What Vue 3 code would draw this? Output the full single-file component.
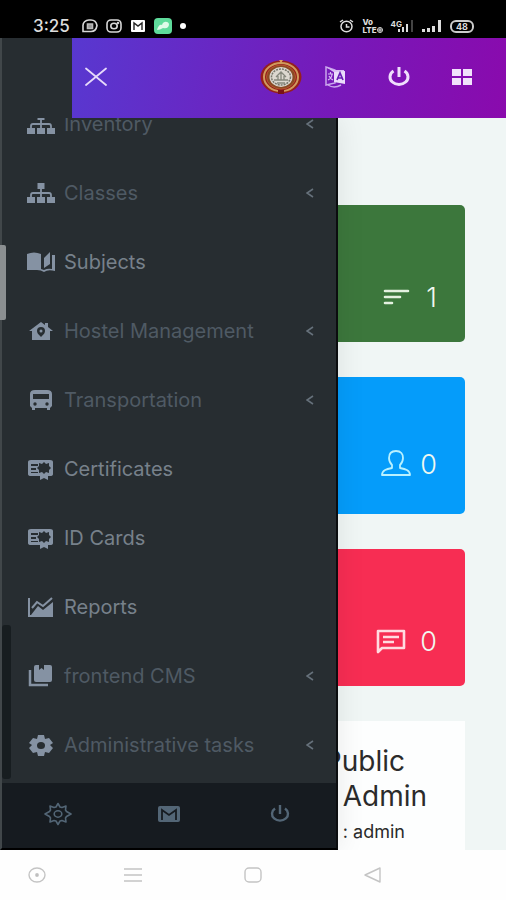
<script setup>
const items = [
  { label: 'Inventory', icon: 'tree', group: true },
  { label: 'Classes', icon: 'tree', group: true },
  { label: 'Subjects', icon: 'book' },
  { label: 'Hostel Management', icon: 'home', group: true },
  { label: 'Transportation', icon: 'bus', group: true },
  { label: 'Certificates', icon: 'certificate' },
  { label: 'ID Cards', icon: 'certificate' },
  { label: 'Reports', icon: 'chart' },
  { label: 'frontend CMS', icon: 'album', group: true },
  { label: 'Administrative tasks', icon: 'gear', group: true },
]
</script>

<template>
  <div class="phone">
    <div class="status">
      <div class="status-left">
        <span class="time">3:25</span>
        <svg width="16" height="14" viewBox="0 0 16 14" fill="none" stroke="#d8d8d8" stroke-width="1.6">
          <path d="M1 12.500V7a6 5.500 0 0 1 6-6h2q5 0 6 5.500-1 6-6 6z" /><path d="M5.500 5h5v4.500h-5z" fill="#999" stroke="#bbb" />
        </svg>
        <svg width="16" height="14" viewBox="0 0 16 14" fill="none" stroke="#d8d8d8" stroke-width="1.600">
          <rect x="1" y="1" width="14" height="12" rx="4" /><ellipse cx="8" cy="7" rx="3.200" ry="2.800" /><circle cx="12" cy="4" r=".5" />
        </svg>
        <svg width="16" height="12" viewBox="0 0 16 12">
          <rect x="1" width="14" height="12" rx="1" fill="#fff" /><path d="M4 10V3l4 3 4-3v7" fill="none" stroke="#222" stroke-width="1.400" />
        </svg>
        <svg class="chat-badge" width="18" height="16" viewBox="0 0 18 16">
          <rect width="18" height="16" rx="4" fill="#5edb9b" /><path d="M3 12c1-4 3-6 5-5 1-4 6-4 7-1 0 4-3 5-6 4-2 1-4 2-6 2z" fill="#dffbe9" />
        </svg>
        <span class="dot"></span>
      </div>
      <div class="status-right">
        <svg width="15" height="14" viewBox="0 0 15 14" fill="none" stroke="#ddd" stroke-width="1.500">
          <ellipse cx="7.500" cy="7.500" rx="5.500" ry="5.300" /><path d="M1 3l3-2M14 3l-3-2M7.500 5v3h3" />
        </svg>
        <span class="volte">
          <span>Vo</span>
          <span class="lte">LTE<svg width="6" height="6" viewBox="0 0 6 6" fill="none" stroke="#ddd"><circle cx="3" cy="3" r="2.500" /><path d="M3 1v4M1 3h4" /></svg></span>
        </span>
        <span class="signal">
          <span class="net">4G</span>
          <svg width="18" height="12" viewBox="0 0 18 12" fill="#ddd">
            <path d="M2 9h2v3H2zM6 7h2v5H6zM10 4h2v8h-2z" /><path d="M15 0h2v12h-2z" fill="#444" />
          </svg>
        </span>
        <svg width="20" height="12" viewBox="0 0 20 12" fill="#ddd">
          <path d="M0 9h3v3H0zM5 8h3v4H5zM10 6h3v6h-3zM16 0h3v12h-3z" />
        </svg>
        <span class="battery">48</span>
      </div>
    </div>

    <header class="header">
      <div class="brand"></div>
      <div class="toolbar">
        <button class="tool close" aria-label="Close menu">
          <svg width="22" height="20" viewBox="0 0 22 20" fill="none" stroke="#e6d9fa" stroke-width="1.800" stroke-linecap="round"><path d="M1 1.500l20 16.500M21 1.500L1 18" /></svg>
        </button>
        <div class="tools">
          <button class="tool" aria-label="School">
            <svg width="42" height="36" viewBox="0 0 42 36">
              <ellipse cx="21" cy="18" rx="20.500" ry="16.500" fill="#96201c" />
              <ellipse cx="21" cy="18" rx="17" ry="14" fill="none" stroke="#cf9a5c" stroke-width="2" />
              <ellipse cx="21" cy="18" rx="14.500" ry="12" fill="#8a4a24" stroke="#b5562c" />
              <ellipse cx="21" cy="18" rx="11.500" ry="10" fill="#dcd8d0" />
              <ellipse cx="21" cy="18" rx="9.500" ry="8" fill="none" stroke="#77766c" stroke-width="1.500" stroke-dasharray="2 1" />
              <path d="M14 21h14M16 18l5-5 5 5M18 17v4M21 14v7M24 17v4M17 24h8" fill="none" stroke="#85877c" stroke-width="1.300" />
              <path d="M19 1l2 3 2-3z" fill="#e0a060" /><path d="M18 31h6v4h-6z" fill="#7a1216" />
            </svg>
          </button>
          <button class="tool" aria-label="Language">
            <svg width="22" height="22" viewBox="0 0 22 22">
              <path d="M2 1l9 3v13l-9 2z" fill="none" stroke="#c9a6ec" stroke-width="1.500" />
              <path d="M4 8h5M6.500 6v2M8 8c0 3-2 5-4 6M5 10c1 2 2 3 4 4" fill="none" stroke="#d9bdf4" stroke-width="1.200" />
              <path d="M2 1l8 3h10v2l-9 1z" fill="#d9bdf4" />
              <path d="M10 6l11-1v13l-11-2z" fill="#eadcfb" />
              <path d="M13 14l3-7 3 7M14 12h4" fill="none" stroke="#681db5" stroke-width="1.700" />
              <path d="M4 19q6 4 13 0" fill="none" stroke="#c9a6ec" stroke-width="1.500" />
            </svg>
          </button>
          <button class="tool" aria-label="Log out">
            <svg width="22" height="20" viewBox="0 0 22 20" fill="none" stroke="#efdffc" stroke-width="3"><path d="M5.500 4A9 7.500 0 1 0 16.500 4M11 0v10" /></svg>
          </button>
          <button class="tool" aria-label="Dashboard">
            <svg width="20" height="16" viewBox="0 0 20 16" fill="#f1e2fb"><path d="M0 0h9v7H0zM11 0h9v7h-9zM0 9h9v7H0zM11 9h9v7h-9z" /></svg>
          </button>
        </div>
      </div>
    </header>

    <div class="body">
      <main class="content">
        <section class="card green">
          <svg width="27" height="18" viewBox="0 0 27 18" fill="none" stroke="#e4f1e0" stroke-width="2.600" stroke-linecap="round"><path d="M2 3h23M2 9h15M2 15h7" /></svg>
          <span>1</span>
        </section>
        <section class="card blue">
          <svg width="32" height="28" viewBox="0 0 32 28" fill="none" stroke="#b9f1ff" stroke-width="1.800" stroke-linejoin="round"><path d="M16 2c-5 0-7 3-7 7 0 3 1 5 3 7v3C7 20 2 21 2 26h28c0-5-5-6-10-7v-3c2-2 3-4 3-7 0-4-2-7-7-7z" /></svg>
          <span>0</span>
        </section>
        <section class="card red">
          <svg width="30" height="26" viewBox="0 0 30 26" fill="none" stroke="#ffdbe0" stroke-width="2.600" stroke-linejoin="round"><path d="M2 3h26v17H6l-4 4zM7 9h16M7 14h11" /></svg>
          <span>0</span>
        </section>
        <section class="profile">
          <h2><span class="line">Public</span><span class="line wide">Admin</span></h2>
          <p class="line">: admin</p>
        </section>
      </main>

      <aside class="sidebar">
        <nav class="menu">
          <a v-for="item in items" :key="item.label" href="#" class="item" :class="{ group: item.group }">
            <svg class="icon" width="28" height="24" viewBox="0 0 28 24">
              <g v-if="item.icon === 'tree'">
                <path d="M10.500 2h7v6h-7zM0 16h8v6H0zM10 16h8v6h-8zM20 16h8v6h-8z" fill="currentColor" />
                <path d="M14 7v10M4 17v-3q0-2 2-2h16q2 0 2 2v3" fill="none" stroke="currentColor" stroke-width="1.800" />
              </g>
              <g v-else-if="item.icon === 'book'" fill="currentColor">
                <path d="M0 4q7-3 14 0v15l3 1q4-2 8-1V5h3v16q-7-2-11 1-3-2-7-2H0z" />
                <path d="M17 8l6-6v12l-6 4z" />
              </g>
              <g v-else-if="item.icon === 'home'">
                <path d="M14 3l4 3V4h3v4l5 4h-3v9H5v-9H2z" fill="currentColor" />
                <path d="M14 18c-3-3-4-4-4-6a4 4 0 0 1 8 0c0 2-1 3-4 6z" class="cut" /><circle cx="14" cy="12" r="1.500" fill="currentColor" />
              </g>
              <g v-else-if="item.icon === 'bus'">
                <path d="M3 6q0-4 5-4h12q5 0 5 4v12l-2 2v2h-3v-2H8v2H5v-2l-2-2z" fill="currentColor" />
                <path d="M6 6h16v5H6z" class="cut" /><circle cx="8" cy="16" r="1.700" class="cut" /><circle cx="20" cy="16" r="1.700" class="cut" />
              </g>
              <g v-else-if="item.icon === 'certificate'">
                <path d="M4 3h19q3 0 3 2v12q0 2-3 2h-2v4l-4-2-4 2v-4H4q-3 0-3-2V5q0-2 3-2z" fill="currentColor" />
                <path d="M4 7h7v2H4zM4 11h5v2H4zM4 15h7v1H4z" class="cut" />
                <path d="M17 5l2 2 3-1v3l2 2-2 2v3l-3-1-2 2-2-2-3 1v-3l-2-2 2-2V6l3 1z" class="cut" />
              </g>
              <g v-else-if="item.icon === 'chart'">
                <path d="M2 3v18h24" fill="none" stroke="currentColor" stroke-width="2" />
                <path d="M5 13l5-6 6 4 9-8" fill="none" stroke="currentColor" stroke-width="2" />
                <path d="M4 20l7-9 5 4 10-8v13z" fill="currentColor" />
              </g>
              <g v-else-if="item.icon === 'album'">
                <path d="M3 6v15h18" fill="none" stroke="currentColor" stroke-width="2.500" />
                <path d="M9 1h14q2 0 2 2v13q0 2-2 2H9q-2 0-2-2V3q0-2 2-2z" fill="currentColor" /><path d="M12 1h5v5l-2.500-2L12 6z" class="cut" />
              </g>
              <g v-else>
                <path d="M11 2h6l1 4 4-1 4 5-3 2 3 3-4 5-4-1-1 4h-6l-1-4-4 1-4-5 3-3-3-2 4-5 4 1z" fill="currentColor" /><ellipse cx="14" cy="12.500" rx="4" ry="3.500" class="cut" />
              </g>
            </svg>
            <span class="label">{{ item.label }}</span>
            <svg v-if="item.group" width="8" height="10" viewBox="0 0 8 10" fill="none" stroke="#66717b" stroke-width="1.600"><path d="M7 1L1 5l6 4" /></svg>
          </a>
        </nav>
        <div class="actions">
          <button class="action" aria-label="Settings">
            <svg width="28" height="24" viewBox="0 0 28 24" fill="none" stroke="currentColor" stroke-width="1.600" stroke-linejoin="round">
              <path d="M14 1.500l2 3.500 2 .5 4-1.500-.5 4 1 1.500 4.500 2.500-4.500 2.500-1 1.500.5 4-4-1.500-2 .5-2 3.500-2-3.500-2-.5-4 1.500.5-4-1-1.500L1 12l4.500-2.500 1-1.500L6 4l4 1.500 2-.5z" /><ellipse cx="14" cy="12" rx="3.800" ry="3.200" />
            </svg>
          </button>
          <button class="action" aria-label="Messages">
            <svg width="22" height="16" viewBox="0 0 22 16"><rect width="22" height="16" rx="2" fill="currentColor" /><path d="M4 14V4l7 5 7-5v10" fill="none" stroke="#161b20" stroke-width="1.800" /></svg>
          </button>
          <button class="action" aria-label="Sign out">
            <svg width="20" height="18" viewBox="0 0 20 18" fill="none" stroke="currentColor" stroke-width="2.400"><path d="M5 3.500A8 6.800 0 1 0 15 3.500M10 0v9" /></svg>
          </button>
        </div>
        <span class="thumb light"></span>
        <span class="thumb dark"></span>
      </aside>
    </div>

    <div class="navbar">
      <svg width="18" height="16" viewBox="0 0 18 16" fill="none" stroke="#c4c4c4" stroke-width="1.400"><ellipse cx="9" cy="8" rx="8" ry="7" /><circle cx="9" cy="8" r="1.200" fill="#aaa" /></svg>
      <svg width="18" height="14" viewBox="0 0 18 14" fill="none" stroke="#c4c4c4" stroke-width="1.400"><path d="M0 1h18M0 7h18M0 13h18" /></svg>
      <svg width="18" height="16" viewBox="0 0 18 16" fill="none" stroke="#c4c4c4" stroke-width="1.400"><rect x="1" y="1" width="16" height="14" rx="4" /></svg>
      <svg width="18" height="18" viewBox="0 0 18 18" fill="none" stroke="#c4c4c4" stroke-width="1.400" stroke-linejoin="round"><path d="M1 9l15-7v14z" /></svg>
    </div>
  </div>
</template>

<style>
body { margin: 0; background: #fff; }
</style>

<style scoped>
.phone {
  min-height: 100vh;
  display: flex;
  flex-direction: column;
  font-family: Inter, Roboto, sans-serif;
}
button { border: 0; padding: 0; background: none; color: inherit; }
svg { display: block; flex: none; }

.status {
  height: 38px;
  box-sizing: border-box;
  padding: 14px 32px 0 33px;
  display: flex;
  justify-content: space-between;
  background: #000;
  color: #ddd;
}
.status-left, .status-right { display: flex; align-items: center; height: 24px; }
.status-left { gap: 8px; }
.status-right { gap: 8px; }
.time { font-size: 17px; font-weight: 500; line-height: 24px; margin-right: 4px; }
.dot { width: 6px; height: 6px; border-radius: 50%; background: #fff; }
.volte { display: flex; flex-direction: column; font-size: 8px; font-weight: 800; line-height: 8px; }
.lte { display: flex; align-items: center; }
.signal { display: flex; }
.net { font-size: 8px; font-weight: 700; line-height: 8px; margin-right: -6px; }
.battery {
  border: 2px solid #ccc;
  border-radius: 6px;
  width: 20px;
  text-align: center;
  font-size: 9px;
  font-weight: 700;
  line-height: 9px;
}

.header { display: flex; height: 80px; }
.brand { width: 72px; box-sizing: border-box; background: #272d31; border-left: 2px solid #41474a; }
.toolbar {
  flex: 1;
  box-sizing: border-box;
  padding: 0 34px 2px 13px;
  display: flex;
  align-items: center;
  justify-content: space-between;
  background: linear-gradient(100deg, #5838d0, #7619b9 60%, #8a0aad);
}
.tools { display: flex; align-items: center; gap: 42px; }
.tools .tool:first-child { margin-right: -20px; }

.body { position: relative; flex: 1; display: flex; overflow: hidden; }
.content {
  flex: 1;
  display: flex;
  flex-direction: column;
  gap: 35px;
  padding: 87px 41px 0;
  background: #f0f6f5;
}
.card {
  height: 137px;
  box-sizing: border-box;
  padding: 0 28px 28px;
  border-radius: 5px;
  display: flex;
  align-items: flex-end;
  justify-content: flex-end;
  gap: 8px;
  font-size: 27px;
  font-weight: 300;
  line-height: 32px;
  color: #f0f8f0;
}
.card svg { margin-bottom: 4px; }
.green { background: #3c773c; gap: 16px; }
.green svg { margin-bottom: 8px; }
.blue { background: #059cfa; padding-bottom: 33px; }
.red { background: #f72d53; gap: 14px; }
.profile { flex: 1; background: #fdfefe; padding-top: 23px; color: #2b2b2b; text-align: right; }
.profile h2, .profile p { margin: 0; font-weight: 400; line-height: 35px; }
.profile h2 { font-size: 28px; }
.profile p { font-size: 18px; }
.line { display: block; padding-right: 60px; }
.wide { padding-right: 38px; }

.sidebar {
  position: absolute;
  inset: 0 auto 0 0;
  width: 338px;
  box-sizing: border-box;
  display: flex;
  flex-direction: column;
  border-left: 2px solid #41474a;
  border-right: 2px solid #0b0d0f;
  border-bottom: 2px solid #000;
  background: #272d31;
  box-shadow: 2px 0 26px rgba(0, 0, 0, 0.08);
}
.menu {
  flex: 1;
  min-height: 0;
  overflow: hidden;
  display: flex;
  flex-direction: column;
  justify-content: flex-end;
  padding-bottom: 4px;
}
.item {
  flex: none;
  height: 69px;
  padding: 0 22px 0 25px;
  display: flex;
  align-items: center;
  gap: 9px;
  color: #77818b;
  font-size: 20px;
  text-decoration: none;
}
.group { color: #4f5a64; }
.icon { color: #8592a3; }
.cut { fill: #272d31; }
.label { flex: 1; white-space: nowrap; }
.actions {
  height: 65px;
  box-sizing: border-box;
  padding-bottom: 4px;
  flex: none;
  display: grid;
  grid-template-columns: repeat(3, 1fr);
  place-items: center;
  background: #161b20;
  color: #536676;
}
.thumb { position: absolute; }
.light { left: -2px; top: 127px; width: 6px; height: 75px; background: #8b8f91; border-radius: 0 2px 2px 0; }
.dark { left: 0; bottom: 69px; width: 9px; height: 154px; background: #171d20; border-radius: 3px; }

.navbar {
  height: 50px;
  box-sizing: border-box;
  padding: 0 28px;
  display: flex;
  align-items: center;
  gap: 102px;
  background: #fefefe;
}
.navbar svg:first-child { margin-right: -24px; }
</style>
